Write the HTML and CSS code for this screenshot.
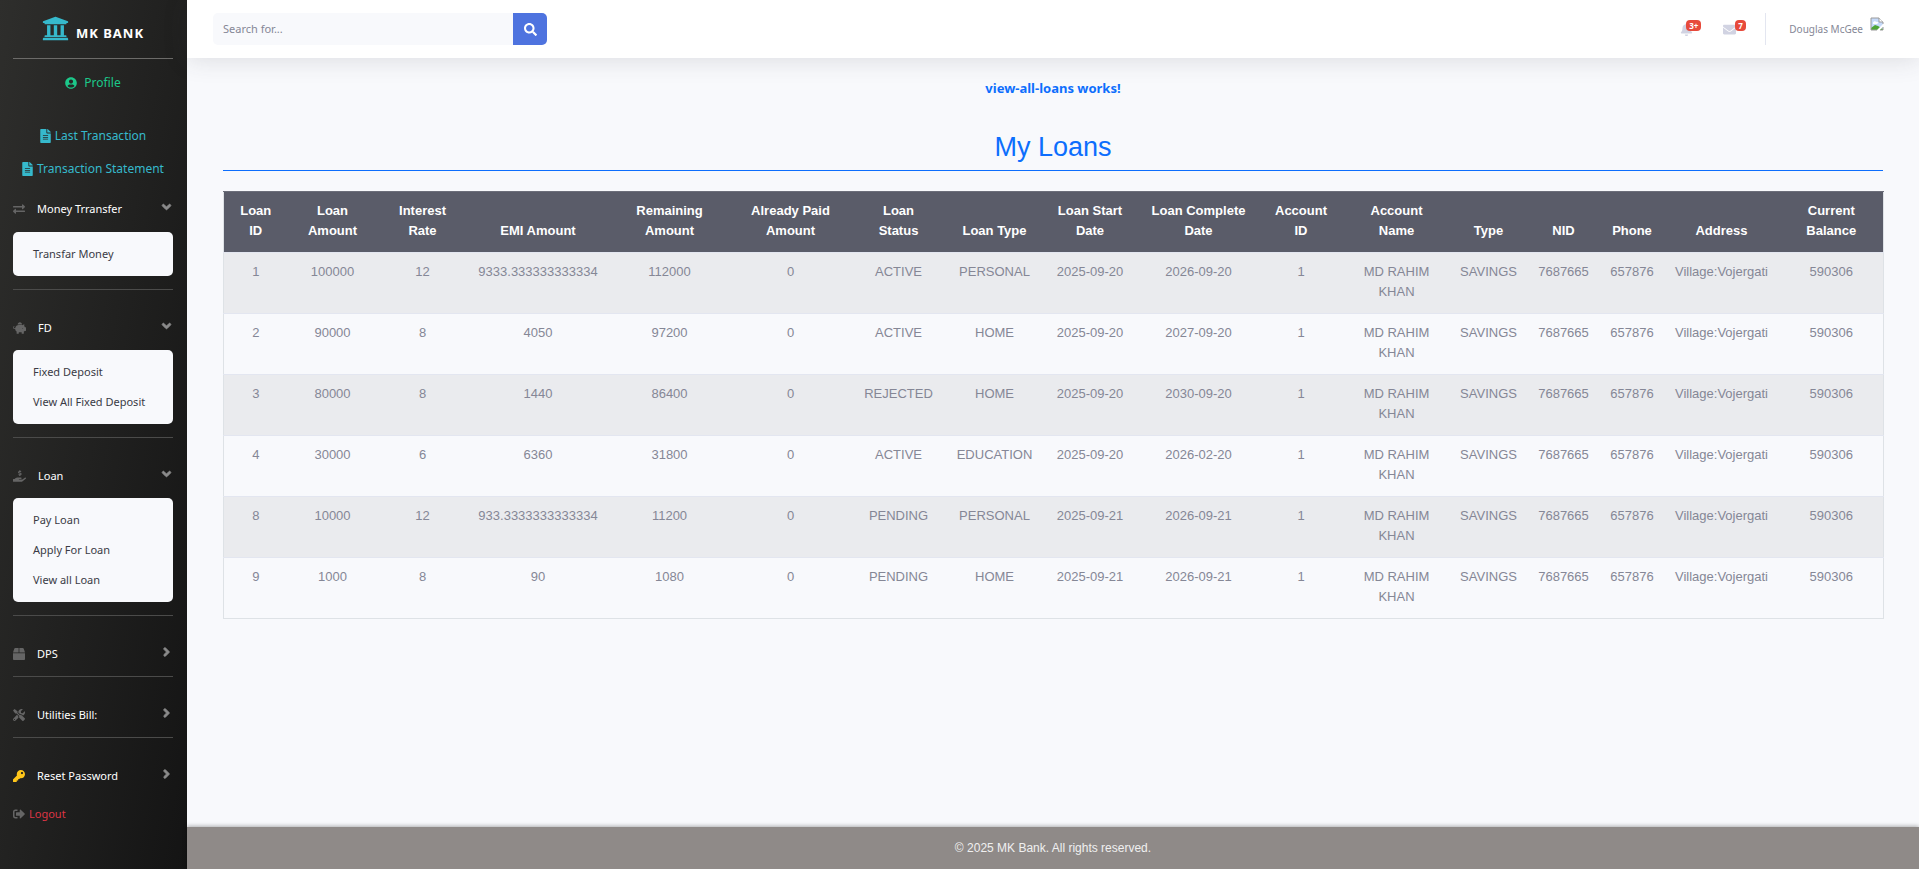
FILE: index.html
```html
<!DOCTYPE html>
<html lang="en">
<head>
<meta charset="utf-8">
<title>MK Bank</title>
<link rel="stylesheet" href="styles.css">
</head>
<body>
<svg class="sprite" aria-hidden="true">
  <symbol id="university" viewBox="0 0 512 512"><path d="M496 128v16a8 8 0 0 1-8 8h-24v12c0 6.627-5.373 12-12 12H60c-6.627 0-12-5.373-12-12v-12H24a8 8 0 0 1-8-8v-16a8 8 0 0 1 4.941-7.392l232-88a7.996 7.996 0 0 1 6.118 0l232 88A8 8 0 0 1 496 128zm-24 304H40c-13.255 0-24 10.745-24 24v16a8 8 0 0 0 8 8h464a8 8 0 0 0 8-8v-16c0-13.255-10.745-24-24-24zM96 192v192H60c-6.627 0-12 5.373-12 12v20h416v-20c0-6.627-5.373-12-12-12h-36V192h-64v192h-64V192h-64v192h-64V192H96z"/></symbol>
  <symbol id="user" viewBox="0 0 496 512"><path d="M248 8C111 8 0 119 0 256s111 248 248 248 248-111 248-248S385 8 248 8zm0 96c48.6 0 88 39.4 88 88s-39.4 88-88 88-88-39.4-88-88 39.4-88 88-88zm0 344c-58.7 0-111.3-26.6-146.5-68.2 18.8-35.4 55.6-59.8 98.5-59.8 2.4 0 4.8.4 7.1 1.1 13 4.2 26.6 6.9 40.9 6.9 14.3 0 28-2.7 40.9-6.9 2.3-.7 4.7-1.1 7.1-1.1 42.9 0 79.7 24.4 98.5 59.8C359.3 421.4 306.7 448 248 448z"/></symbol>
  <symbol id="file" viewBox="0 0 384 512"><path d="M224 136V0H24C10.7 0 0 10.7 0 24v464c0 13.3 10.7 24 24 24h336c13.3 0 24-10.7 24-24V160H248c-13.2 0-24-10.8-24-24zm64 236c0 6.6-5.4 12-12 12H108c-6.6 0-12-5.4-12-12v-8c0-6.6 5.4-12 12-12h168c6.6 0 12 5.4 12 12v8zm0-64c0 6.6-5.4 12-12 12H108c-6.6 0-12-5.4-12-12v-8c0-6.6 5.4-12 12-12h168c6.6 0 12 5.4 12 12v8zm0-72v8c0 6.6-5.4 12-12 12H108c-6.6 0-12-5.4-12-12v-8c0-6.6 5.4-12 12-12h168c6.6 0 12 5.4 12 12zm96-114.1v6.1H256V0h6.1c6.4 0 12.5 2.5 17 7l97.9 98c4.5 4.5 7 10.6 7 16.9z"/></symbol>
  <symbol id="exchange" viewBox="0 0 512 512"><path d="M0 168v-16c0-13.255 10.745-24 24-24h360V80c0-21.367 25.899-32.042 40.971-16.971l80 80c9.372 9.373 9.372 24.569 0 33.941l-80 80C409.956 271.982 384 261.456 384 240v-48H24c-13.255 0-24-10.745-24-24zm488 152H128v-48c0-21.314-25.862-32.08-40.971-16.971l-80 80c-9.372 9.373-9.372 24.569 0 33.941l80 80C102.057 463.997 128 453.437 128 432v-48h360c13.255 0 24-10.745 24-24v-16c0-13.255-10.745-24-24-24z"/></symbol>
  <symbol id="angle-down" viewBox="0 0 320 512"><path d="M143 352.3L7 216.3c-9.4-9.4-9.4-24.6 0-33.9l22.6-22.6c9.4-9.4 24.6-9.4 33.9 0l96.4 96.4 96.4-96.4c9.4-9.4 24.6-9.4 33.9 0l22.6 22.6c9.4 9.4 9.4 24.6 0 33.9l-136 136c-9.2 9.4-24.4 9.4-33.8 0z"/></symbol>
  <symbol id="angle-right" viewBox="0 0 256 512"><path d="M224.3 273l-136 136c-9.4 9.4-24.6 9.4-33.9 0l-22.6-22.6c-9.4-9.4-9.4-24.6 0-33.9l96.4-96.4-96.4-96.4c-9.4-9.4-9.4-24.6 0-33.9L54.3 103c9.4-9.4 24.6-9.4 33.9 0l136 136c9.5 9.4 9.5 24.6.1 34z"/></symbol>
  <symbol id="search" viewBox="0 0 512 512"><path d="M505 442.7L405.3 343c-4.5-4.5-10.6-7-17-7H372c27.6-35.3 44-79.7 44-128C416 93.1 322.9 0 208 0S0 93.1 0 208s93.1 208 208 208c48.3 0 92.7-16.4 128-44v16.3c0 6.4 2.5 12.5 7 17l99.7 99.7c9.4 9.4 24.6 9.4 33.9 0l28.3-28.3c9.4-9.4 9.4-24.6.1-34zM208 336c-70.7 0-128-57.2-128-128 0-70.7 57.2-128 128-128 70.7 0 128 57.2 128 128 0 70.7-57.2 128-128 128z"/></symbol>
  <symbol id="bell" viewBox="0 0 448 512"><path d="M224 512c35.32 0 63.97-28.65 63.97-64H160.03c0 35.35 28.65 64 63.97 64zm215.39-149.71c-19.32-20.76-55.47-51.99-55.47-154.29 0-77.7-54.48-139.9-127.94-155.16V32c0-17.67-14.32-32-31.98-32s-31.98 14.33-31.98 32v20.84C118.56 68.1 64.08 130.3 64.08 208c0 102.3-36.15 133.53-55.47 154.29-6 6.45-8.66 14.16-8.61 21.71.11 16.4 12.98 32 32.1 32h383.8c19.12 0 32-15.6 32.1-32 .05-7.55-2.61-15.27-8.61-21.71z"/></symbol>
  <symbol id="envelope" viewBox="0 0 512 512"><path d="M502.3 190.8c3.9-3.1 9.7-.2 9.7 4.7V400c0 26.5-21.5 48-48 48H48c-26.5 0-48-21.5-48-48V195.6c0-5 5.7-7.8 9.7-4.7 22.4 17.4 52.1 39.5 154.1 113.6 21.1 15.4 56.7 47.8 92.2 47.6 35.7.3 72-32.8 92.3-47.6 102-74.1 131.6-96.3 154-113.7zM256 320c23.2.4 56.6-29.2 73.4-41.4 132.7-96.3 142.8-104.7 173.4-128.7 5.8-4.5 9.2-11.5 9.2-18.9v-19c0-26.5-21.5-48-48-48H48c-26.5 0-48 21.5-48 48v19c0 7.4 3.4 14.3 9.2 18.9 30.6 23.9 40.7 32.4 173.4 128.7 16.8 12.2 50.2 41.8 73.4 41.4z"/></symbol>
  <symbol id="key" viewBox="0 0 512 512"><path d="M512 176.001C512 273.203 433.202 352 336 352c-11.22 0-22.19-1.062-32.827-3.069l-24.012 27.014A23.999 23.999 0 0 1 261.223 384H224v40c0 13.255-10.745 24-24 24h-40v40c0 13.255-10.745 24-24 24H24c-13.255 0-24-10.745-24-24v-78.059c0-6.365 2.529-12.47 7.029-16.971l161.802-161.802C163.108 213.814 160 195.271 160 176 160 78.798 238.797.001 335.999 0 433.488-.001 512 78.511 512 176.001zM336 128c0 26.51 21.49 48 48 48s48-21.49 48-48-21.49-48-48-48-48 21.49-48 48z"/></symbol>
  <symbol id="tools" viewBox="0 0 512 512"><path d="M501.1 395.7L384 278.6c-23.1-23.1-57.6-27.6-85.4-13.9L192 158.1V96L64 0 0 64l96 128h62.1l106.6 106.6c-13.6 27.8-9.2 62.3 13.9 85.4l117.1 117.1c14.6 14.6 38.2 14.6 52.7 0l52.7-52.7c14.5-14.6 14.5-38.2 0-52.7zM331.7 225c28.3 0 54.9 11 74.9 31l19.4 19.4c15.8-6.9 30.8-16.5 43.8-29.5 37.1-37.1 49.7-89.3 37.9-136.7-2.2-9-13.5-12.1-20.1-5.5l-74.4 74.4-67.9-11.3L334 98.9l74.4-74.4c6.6-6.6 3.4-17.9-5.7-20.2-47.4-11.7-99.6.9-136.6 37.9-28.5 28.5-41.9 66.1-41.2 103.6l82.1 82.1c8.1-1.9 16.5-2.9 24.7-2.9zm-103.9 82l-56.7-56.7L18.7 402.8c-25 25-25 65.5 0 90.5s65.5 25 90.5 0l123.6-123.6c-7.6-19.9-9.9-41.6-5-62.7zM64 472c-13.2 0-24-10.8-24-24 0-13.3 10.7-24 24-24s24 10.7 24 24c0 13.2-10.7 24-24 24z"/></symbol>
  <symbol id="sign-out" viewBox="0 0 512 512"><path d="M497 273L329 441c-15 15-41 4.5-41-17v-96H152c-13.3 0-24-10.7-24-24v-96c0-13.3 10.7-24 24-24h136V88c0-21.4 25.9-32 41-17l168 168c9.3 9.4 9.3 24.6 0 34zM192 436v-40c0-6.6-5.4-12-12-12H96c-17.7 0-32-14.3-32-32V160c0-17.7 14.3-32 32-32h84c6.6 0 12-5.4 12-12V76c0-6.6-5.4-12-12-12H96c-53 0-96 43-96 96v192c0 53 43 96 96 96h84c6.6 0 12-5.4 12-12z"/></symbol>
  <symbol id="piggy" viewBox="0 0 576 512"><path d="M560 224h-29.5c-8.8-20-21.6-37.7-37.4-52.5L512 96h-32c-29.4 0-55.4 13.5-73 34.3-7.6-1.1-15.1-2.3-23-2.3H256c-77.4 0-141.9 55-156.8 128H56c-14.8 0-26.5-13.5-23.5-28.8C34.7 215.8 45.4 208 57 208h1c3.3 0 6-2.7 6-6v-20c0-3.3-2.7-6-6-6-28.5 0-53.9 20.4-57.5 48.6C-3.9 258.8 22.7 288 56 288h40c0 52.2 25.4 98.1 64 127.3V496c0 8.8 7.2 16 16 16h64c8.8 0 16-7.2 16-16v-48h128v48c0 8.8 7.2 16 16 16h64c8.8 0 16-7.2 16-16v-80.7c11.8-8.9 22.3-19.4 31.3-31.3H560c8.8 0 16-7.2 16-16V240c0-8.8-7.2-16-16-16zm-128 64c-8.8 0-16-7.2-16-16s7.2-16 16-16 16 7.2 16 16-7.2 16-16 16zM256 96h128c5.4 0 10.7.4 15.9.8 0-.3.1-.5.1-.8 0-53-43-96-96-96s-96 43-96 96c0 2.1.5 4.1.6 6.2 15.2-3.9 31-6.2 47.4-6.2z"/></symbol>
  <symbol id="hand" viewBox="0 0 576 512"><path d="M271.06,144.3l54.27,14.3a8.59,8.59,0,0,1,6.63,8.1c0,4.6-4.09,8.4-9.12,8.4h-35.6a30,30,0,0,1-11.19-2.2c-5.24-2.2-11.28-1.7-15.3,2l-19,17.5a11.68,11.68,0,0,0-2.25,2.66,11.42,11.42,0,0,0,3.88,15.74,83.77,83.77,0,0,0,34.51,11.5V240c0,8.8,7.83,16,17.37,16h17.37c9.55,0,17.38-7.2,17.38-16V222.4c32.93-3.6,57.84-31,53.5-63-3.15-23-22.46-41.3-46.56-47.7L282.68,97.4a8.59,8.59,0,0,1-6.63-8.1c0-4.6,4.09-8.4,9.12-8.4h35.6A30,30,0,0,1,332,83.1c5.23,2.2,11.28,1.7,15.3-2l19-17.5A11.31,11.31,0,0,0,368.47,61a11.43,11.43,0,0,0-3.84-15.78,83.82,83.82,0,0,0-34.52-11.5V16c0-8.8-7.82-16-17.37-16H295.37C285.82,0,278,7.2,278,16V33.6c-32.89,3.6-57.85,31-53.51,63C227.63,119.6,247,137.9,271.06,144.3ZM565.27,328.1c-11.8-10.7-30.2-10-42.6,0L430.27,402a63.64,63.64,0,0,1-40,14H272a16,16,0,0,1,0-32h78.29c15.9,0,30.71-10.9,33.25-26.6a31.2,31.2,0,0,0,.46-5.46A32,32,0,0,0,352,320H192a117.66,117.66,0,0,0-74.1,26.29L71.4,384H16A16,16,0,0,0,0,400v96a16,16,0,0,0,16,16H372.77a64,64,0,0,0,40-14L564,377a32,32,0,0,0,1.28-48.9Z"/></symbol>
  <symbol id="box" viewBox="0 0 512 512"><path d="M509.5 184.6L458.9 32.8C452.4 13.2 434.1 0 413.4 0H272v192h238.7c-.4-2.5-.4-5-1.2-7.4zM240 0H98.6c-20.7 0-39 13.2-45.5 32.8L2.5 184.6c-.8 2.4-.8 4.9-1.2 7.4H240V0zM0 224v240c0 26.5 21.5 48 48 48h416c26.5 0 48-21.5 48-48V224H0z"/></symbol>
</svg>
<div class="layout">
  <nav class="sidebar">
    <a class="brand" href="#"><svg class="brand-icon"><use href="#university"/></svg><span>MK BANK</span></a>
    <hr class="rule rule-strong">
    <a class="quick profile" href="#"><svg class="icon"><use href="#user"/></svg>Profile</a>
    <a class="quick" href="#"><svg class="icon-file"><use href="#file"/></svg>Last Transaction</a>
    <a class="quick" href="#"><svg class="icon-file"><use href="#file"/></svg>Transaction Statement</a>

    <button class="toggle toggle-first" type="button"><svg class="icon"><use href="#exchange"/></svg>Money Trransfer<svg class="arrow"><use href="#angle-down"/></svg></button>
    <div class="submenu"><a href="#">Transfar Money</a></div>
    <hr class="rule">
    <button class="toggle" type="button"><svg class="icon icon-wide"><use href="#piggy"/></svg>FD<svg class="arrow"><use href="#angle-down"/></svg></button>
    <div class="submenu"><a href="#">Fixed Deposit</a><a href="#">View All Fixed Deposit</a></div>
    <hr class="rule">
    <button class="toggle" type="button"><svg class="icon icon-wide"><use href="#hand"/></svg>Loan<svg class="arrow"><use href="#angle-down"/></svg></button>
    <div class="submenu"><a href="#">Pay Loan</a><a href="#">Apply For Loan</a><a href="#">View all Loan</a></div>
    <hr class="rule">
    <button class="toggle" type="button"><svg class="icon"><use href="#box"/></svg>DPS<svg class="arrow"><use href="#angle-right"/></svg></button>
    <hr class="rule">
    <button class="toggle" type="button"><svg class="icon"><use href="#tools"/></svg>Utilities Bill:<svg class="arrow"><use href="#angle-right"/></svg></button>
    <hr class="rule">
    <button class="toggle" type="button"><svg class="icon icon-key"><use href="#key"/></svg>Reset Password<svg class="arrow"><use href="#angle-right"/></svg></button>
    <a class="logout" href="#"><svg class="icon"><use href="#sign-out"/></svg>Logout</a>
  </nav>

  <div class="page">
    <header class="topbar">
      <form class="search">
        <input type="text" placeholder="Search for..." aria-label="Search">
        <button type="button" aria-label="Search"><svg><use href="#search"/></svg></button>
      </form>
      <div class="tools">
        <a class="notice notice-bell" href="#" aria-label="Alerts"><svg><use href="#bell"/></svg><span class="badge">3+</span></a>
        <a class="notice" href="#" aria-label="Messages"><svg><use href="#envelope"/></svg><span class="badge">7</span></a>
        <span class="separator"></span>
        <a class="account" href="#">Douglas McGee
          <svg class="avatar" viewBox="0 0 14 14"><path d="M1 1h8l4 4v8H1z" fill="#c6dafa"/><path d="M3 6c0-2 3-2 3-1 2-1 3 1 1 2H4C3 7 3 7 3 6z" fill="#fff"/><path d="M1 13V11l4-3 3 1 5 3v1z" fill="#4ea536"/><path d="M7 13l6-6v3l-3 3z" fill="#fff"/><path d="M1 13V1h8l4 4v2M1 13h6M10 13h3v-3" fill="none" stroke="#9a9a9a"/><path d="M9 1v4h4" fill="#fff" stroke="#9a9a9a"/></svg>
        </a>
      </div>
    </header>

    <main class="content">
      <p class="status">view-all-loans works!</p>
      <h2 class="title">My Loans</h2>
      <table class="loans">
        <colgroup><col class="w64"><col class="w90"><col class="w90"><col class="w141"><col class="w122"><col class="w120"><col class="w96"><col class="w96"><col class="w95"><col class="w122"><col class="w83"><col class="w108"><col class="w76"><col class="w74"><col class="w63"><col class="w116"><col class="w104"></colgroup>
        <thead><tr><th>Loan<br>ID</th><th>Loan<br>Amount</th><th>Interest<br>Rate</th><th>EMI Amount</th><th>Remaining<br>Amount</th><th>Already Paid<br>Amount</th><th>Loan<br>Status</th><th>Loan Type</th><th>Loan Start<br>Date</th><th>Loan Complete<br>Date</th><th>Account<br>ID</th><th>Account<br>Name</th><th>Type</th><th>NID</th><th>Phone</th><th>Address</th><th>Current<br>Balance</th></tr></thead>
        <tbody>
          <tr><td>1</td><td>100000</td><td>12</td><td>9333.333333333334</td><td>112000</td><td>0</td><td>ACTIVE</td><td>PERSONAL</td><td>2025-09-20</td><td>2026-09-20</td><td>1</td><td>MD RAHIM KHAN</td><td>SAVINGS</td><td>7687665</td><td>657876</td><td>Village:Vojergati</td><td>590306</td></tr>
          <tr><td>2</td><td>90000</td><td>8</td><td>4050</td><td>97200</td><td>0</td><td>ACTIVE</td><td>HOME</td><td>2025-09-20</td><td>2027-09-20</td><td>1</td><td>MD RAHIM KHAN</td><td>SAVINGS</td><td>7687665</td><td>657876</td><td>Village:Vojergati</td><td>590306</td></tr>
          <tr><td>3</td><td>80000</td><td>8</td><td>1440</td><td>86400</td><td>0</td><td>REJECTED</td><td>HOME</td><td>2025-09-20</td><td>2030-09-20</td><td>1</td><td>MD RAHIM KHAN</td><td>SAVINGS</td><td>7687665</td><td>657876</td><td>Village:Vojergati</td><td>590306</td></tr>
          <tr><td>4</td><td>30000</td><td>6</td><td>6360</td><td>31800</td><td>0</td><td>ACTIVE</td><td>EDUCATION</td><td>2025-09-20</td><td>2026-02-20</td><td>1</td><td>MD RAHIM KHAN</td><td>SAVINGS</td><td>7687665</td><td>657876</td><td>Village:Vojergati</td><td>590306</td></tr>
          <tr><td>8</td><td>10000</td><td>12</td><td>933.3333333333334</td><td>11200</td><td>0</td><td>PENDING</td><td>PERSONAL</td><td>2025-09-21</td><td>2026-09-21</td><td>1</td><td>MD RAHIM KHAN</td><td>SAVINGS</td><td>7687665</td><td>657876</td><td>Village:Vojergati</td><td>590306</td></tr>
          <tr><td>9</td><td>1000</td><td>8</td><td>90</td><td>1080</td><td>0</td><td>PENDING</td><td>HOME</td><td>2025-09-21</td><td>2026-09-21</td><td>1</td><td>MD RAHIM KHAN</td><td>SAVINGS</td><td>7687665</td><td>657876</td><td>Village:Vojergati</td><td>590306</td></tr>
        </tbody>
      </table>
    </main>

    <footer class="footer">© 2025 MK Bank. All rights reserved.</footer>
  </div>
</div>
</body>
</html>
```
FILE: styles.css
```css
* { box-sizing: border-box; }
body { margin: 0; background: #f8f9fc; color: #858796; font: 13px/20px "Noto Sans", sans-serif; }
a { color: inherit; text-decoration: none; }
button, input { font: inherit; color: inherit; border: 0; padding: 0; margin: 0; background: none; }
svg { fill: currentColor; flex: none; }
.sprite { display: none; }
.layout { display: flex; min-height: 100vh; }

.sidebar { flex: none; width: 187px; padding: 0 14px 0 13px; display: flex; flex-direction: column; background: linear-gradient(100deg, #2e2e2c, #141414); color: #fff; font-size: 11px; }
.brand { display: flex; align-items: center; justify-content: center; gap: 7px; height: 58px; font-size: 13px; font-weight: 700; letter-spacing: 1px; }
.brand span { padding-top: 8px; }
.brand-icon { width: 27px; height: 27px; margin-bottom: 2px; color: #36b9cc; }
.rule { width: 100%; height: 1px; margin: 13px 0 16px; border: 0; background: #4b4b4a; flex: none; }
.rule-strong { margin: 0; background: #6c6b69; }
.toggle + .rule { margin-top: 0; }
.quick { display: flex; align-items: center; justify-content: center; gap: 4px; height: 33px; font-size: 12px; color: #36b9cc; }
.profile { height: 48px; margin-bottom: 12px; gap: 7px; color: #1cc88a; }
.icon { width: 12px; height: 12px; }
.icon-wide { width: 13px; }
.icon-file { width: 11px; height: 14px; }
.toggle { display: flex; align-items: center; gap: 12px; height: 44px; cursor: pointer; text-align: left; }
.toggle-first { height: 47px; }
.toggle .icon, .logout .icon { color: #656565; }
.toggle .icon-key { color: #ffc61a; }
.arrow { width: 11px; height: 14px; margin: 0 1px 4px auto; color: #8b8b8b; stroke: currentColor; stroke-width: 30; }
.submenu { padding: 7px 0; border-radius: 5px; background: #f8f9fc; color: #3a3b45; }
.submenu a { display: block; padding: 0 20px; line-height: 30px; }
.logout { display: flex; align-items: center; gap: 4px; height: 32px; color: #dc3545; }

.page { flex: 1; min-width: 0; display: flex; flex-direction: column; }
.topbar { display: flex; align-items: center; justify-content: space-between; height: 58px; padding: 0 35px 0 26px; background: #fff; box-shadow: 0 2px 24px rgba(58, 59, 69, 0.15); font-size: 11px; }
.search { display: flex; height: 32px; }
.search input { width: 300px; padding: 0 10px; background: #f8f9fc; border-radius: 5px 0 0 5px; }
.search input::placeholder { color: #858796; opacity: 1; }
.search button { display: grid; place-items: center; width: 34px; background: #4e73df; color: #fff; border-radius: 0 5px 5px 0; }
.search svg { width: 13px; height: 13px; }
.tools { display: flex; align-items: center; }
.notice { position: relative; display: flex; width: 13px; margin-right: 29px; color: #d1d3e2; }
.notice-bell { margin-right: 30px; }
.notice svg { width: 13px; height: 13px; }
.badge { position: absolute; left: 12px; top: -3px; padding: 0 3px; border-radius: 4px; background: #e74a3b; color: #fff; font-size: 8px; font-weight: 700; line-height: 11px; }
.notice-bell .badge { left: 6px; }
.separator { width: 1px; height: 32px; background: #e3e6f0; margin-right: 23px; }
.account { display: flex; align-items: center; gap: 7px; font-size: 10px; }
.avatar { width: 14px; height: 14px; margin-bottom: 10px; }

.content { flex: 1; padding: 20px 36px; text-align: center; color: #858796; font-family: "Liberation Sans", Arial, sans-serif; }
.status { margin: 0 0 32px; color: #0d6efd; font-family: "Noto Sans", sans-serif; font-weight: 700; }
.title { margin: 0 0 20px; padding-bottom: 6px; border-bottom: 1px solid #0d6efd; color: #0d6efd; font-size: 27px; line-height: 34px; font-weight: 400; }
.loans { width: 100%; table-layout: fixed; border-collapse: collapse; border: 1px solid #dee2e6; }
.loans th, .loans td { padding: 9px 4px 11px; vertical-align: top; border-top: 1px solid #e3e6f0; }
.loans th { vertical-align: bottom; background: #5a5c69; color: #fff; border-top-color: #6c6e7a; }
.loans tbody tr:nth-child(odd) { background: #eaebee; }
.loans td:nth-child(12) { padding: 9px 16px 11px; }
.w63 { width: 63px; } .w64 { width: 64px; } .w74 { width: 74px; } .w76 { width: 76px; }
.w83 { width: 83px; } .w90 { width: 90px; } .w95 { width: 95px; } .w96 { width: 96px; }
.w104 { width: 104px; } .w108 { width: 108px; } .w116 { width: 116px; } .w120 { width: 120px; }
.w122 { width: 122px; } .w141 { width: 141px; }

.footer { display: grid; place-items: center; height: 42px; background: #8f8a88; color: #f0f0f0; box-shadow: 0 -1px 4px rgba(0, 0, 0, 0.3); font: 12px/18px "Liberation Sans", Arial, sans-serif; }
```
